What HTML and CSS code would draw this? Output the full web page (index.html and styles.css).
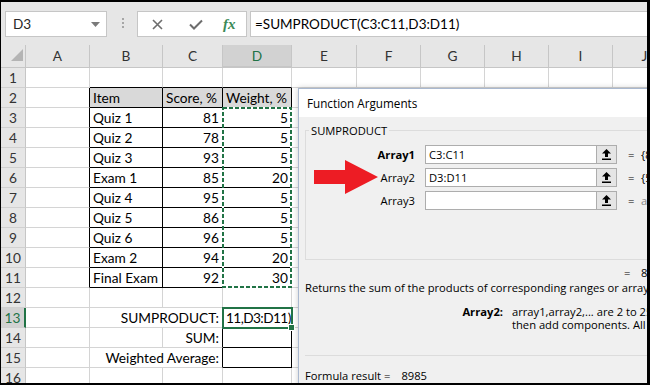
FILE: index.html
```html
<!DOCTYPE html>
<html lang="en">
<head>
    <meta charset="UTF-8">
    <meta name="viewport" content="width=device-width, initial-scale=1.0">
    <title>Function Arguments</title>
    <link rel="stylesheet" href="styles.css">
</head>
<body>
    <div class="app">
        <div class="toolbar">
            <div class="name-box">
                <span>D3</span>
                <svg width="9" height="5" viewBox="0 0 9 5"><path d="M0 0h9L4.5 5z" fill="#7a7a7a"/></svg>
            </div>
            <div class="grip"><i></i><i></i><i></i></div>
            <div class="fx-box">
                <svg class="fx-cancel" width="11" height="11" viewBox="0 0 11 11"><path d="M1 1l9 9M10 1l-9 9" stroke="#6d6d6d" stroke-width="1.6"/></svg>
                <svg class="fx-enter" width="14" height="11" viewBox="0 0 14 11"><path d="M1 5.5l4 4L13 1.5" fill="none" stroke="#6d6d6d" stroke-width="2"/></svg>
                <span class="fx">fx</span>
            </div>
            <div class="formula">=SUMPRODUCT(C3:C11,D3:D11)</div>
        </div>

        <div class="sheet">
            <table class="grid">
                <colgroup>
                    <col class="w-head">
                    <col class="w-a">
                    <col class="w-b">
                    <col class="w-c">
                    <col class="w-d">
                    <col class="w-e">
                    <col class="w-std">
                    <col class="w-std">
                    <col class="w-std">
                    <col class="w-std">
                    <col class="w-std">
                </colgroup>
                <tr class="col-heads">
                    <th class="corner"><svg width="12" height="12" viewBox="0 0 12 12"><path d="M12 0v12H0z" fill="#b4b4b4"/></svg></th>
                    <th>A</th><th>B</th><th>C</th><th class="sel">D</th><th>E</th><th>F</th><th>G</th><th>H</th><th>I</th><th>J</th>
                </tr>
                <tr><th>1</th><td></td><td class="bt"></td><td class="bt"></td><td class="bt"></td><td></td><td></td><td></td><td></td><td></td><td></td></tr>
                <tr><th>2</th><td class="br"></td><td class="t hd">Item</td><td class="t hd">Score, %</td><td class="t hd">Weight, %</td><td></td><td></td><td></td><td></td><td></td><td></td></tr>
                <tr><th>3</th><td class="br"></td><td class="t">Quiz 1</td><td class="t n">81</td><td class="t n">5</td><td></td><td></td><td></td><td></td><td></td><td></td></tr>
                <tr><th>4</th><td class="br"></td><td class="t">Quiz 2</td><td class="t n">78</td><td class="t n">5</td><td></td><td></td><td></td><td></td><td></td><td></td></tr>
                <tr><th>5</th><td class="br"></td><td class="t">Quiz 3</td><td class="t n">93</td><td class="t n">5</td><td></td><td></td><td></td><td></td><td></td><td></td></tr>
                <tr><th>6</th><td class="br"></td><td class="t">Exam 1</td><td class="t n">85</td><td class="t n">20</td><td></td><td></td><td></td><td></td><td></td><td></td></tr>
                <tr><th>7</th><td class="br"></td><td class="t">Quiz 4</td><td class="t n">95</td><td class="t n">5</td><td></td><td></td><td></td><td></td><td></td><td></td></tr>
                <tr><th>8</th><td class="br"></td><td class="t">Quiz 5</td><td class="t n">86</td><td class="t n">5</td><td></td><td></td><td></td><td></td><td></td><td></td></tr>
                <tr><th>9</th><td class="br"></td><td class="t">Quiz 6</td><td class="t n">96</td><td class="t n">5</td><td></td><td></td><td></td><td></td><td></td><td></td></tr>
                <tr><th>10</th><td class="br"></td><td class="t">Exam 2</td><td class="t n">94</td><td class="t n">20</td><td></td><td></td><td></td><td></td><td></td><td></td></tr>
                <tr><th>11</th><td class="br"></td><td class="t">Final Exam</td><td class="t n">92</td><td class="t n">30</td><td></td><td></td><td></td><td></td><td></td><td></td></tr>
                <tr><th>12</th><td></td><td></td><td></td><td></td><td></td><td></td><td></td><td></td><td></td><td></td></tr>
                <tr><th class="sel-row">13</th><td></td><td colspan="2" class="n">SUMPRODUCT:</td><td class="active">11,D3:D11)</td><td></td><td></td><td></td><td></td><td></td><td></td></tr>
                <tr><th>14</th><td></td><td></td><td class="n br">SUM:</td><td class="t"></td><td></td><td></td><td></td><td></td><td></td><td></td></tr>
                <tr><th>15</th><td></td><td colspan="2" class="n br">Weighted Average:</td><td class="t"></td><td></td><td></td><td></td><td></td><td></td><td></td></tr>
                <tr><th>16</th><td></td><td></td><td></td><td></td><td></td><td></td><td></td><td></td><td></td><td></td></tr>
            </table>
            <!-- copy marquee round D3:D11 -->
            <svg class="ants" width="70" height="181" viewBox="0 0 70 181">
                <rect x="1" y="1" width="68" height="179" fill="none" stroke="#fff" stroke-width="2"/>
                <rect x="1" y="1" width="68" height="179" fill="none" stroke="#217346" stroke-width="2" stroke-dasharray="4 2"/>
            </svg>
        </div>

        <div class="dialog">
            <div class="dialog-title">Function Arguments</div>
            <div class="dialog-body">
                <fieldset class="func">
                    <legend>SUMPRODUCT</legend>
                    <div class="arg">
                        <label class="arg-name req">Array1</label>
                        <div class="ref">
                            <span class="ref-input">C3:C11</span>
                            <span class="ref-btn"><svg width="9" height="11" viewBox="0 0 9 11"><path d="M4.5 0L9 4.5H6V8H3V4.5H0z" fill="#000"/><rect y="9.5" width="9" height="1.5" fill="#000"/></svg></span>
                        </div>
                        <span class="arg-eq">=</span>
                        <span class="arg-val">{81;78;93;85;95;86;96;94;92}</span>
                    </div>
                    <div class="arg">
                        <label class="arg-name">Array2</label>
                        <div class="ref">
                            <span class="ref-input">D3:D11</span>
                            <span class="ref-btn"><svg width="9" height="11" viewBox="0 0 9 11"><path d="M4.5 0L9 4.5H6V8H3V4.5H0z" fill="#000"/><rect y="9.5" width="9" height="1.5" fill="#000"/></svg></span>
                        </div>
                        <span class="arg-eq">=</span>
                        <span class="arg-val">{5;5;5;20;5;5;5;20;30}</span>
                    </div>
                    <div class="arg">
                        <label class="arg-name">Array3</label>
                        <div class="ref">
                            <span class="ref-input"></span>
                            <span class="ref-btn"><svg width="9" height="11" viewBox="0 0 9 11"><path d="M4.5 0L9 4.5H6V8H3V4.5H0z" fill="#000"/><rect y="9.5" width="9" height="1.5" fill="#000"/></svg></span>
                        </div>
                        <span class="arg-eq">=</span>
                        <span class="arg-val empty">array</span>
                    </div>
                </fieldset>

                <div class="total"><span class="arg-eq">=</span><span class="total-val">8985</span></div>
                <p class="desc">Returns the sum of the products of corresponding ranges or arrays.</p>
                <div class="help">
                    <b>Array2:</b>
                    <p>array1,array2,... are 2 to 255 arrays for which you want to multiply and<br>then add components. All arrays must have the same dimensions.</p>
                </div>
                <div class="result"><span>Formula result =</span><span class="result-val">8985</span></div>
            </div>
        </div>

        <!-- red pointer added over the screenshot -->
        <svg class="pointer" width="66" height="34" viewBox="0 0 66 34">
            <path d="M1 10H32V0L65 17L32 34V24H1z" fill="#ed1c24"/>
        </svg>
    </div>
</body>
</html>
```

FILE: styles.css
```css
body {
    margin: 0;
    background-color: #000;
}

.app {
    position: relative;
    width: 646px;
    height: 381px;
    margin: 2px 0 0 1px;
    overflow: hidden;
    background-color: #fff;
    font-family: Lato, "Liberation Sans", sans-serif;
    color: #000;
}

/* formula bar */

.toolbar {
    display: flex;
    align-items: flex-start;
    height: 43px;
    padding: 9px 0 0 4px;
    box-sizing: border-box;
    background-color: #e6e6e6;
}

.name-box {
    display: flex;
    align-items: center;
    justify-content: space-between;
    width: 102px;
    height: 26px;
    padding: 0 6px 0 7px;
    box-sizing: border-box;
    background-color: #fff;
    border: 1px solid #c6c6c6;
    font-size: 13.6px;
    color: #262626;
}

.grip {
    display: flex;
    flex-direction: column;
    gap: 2px;
    margin: 7px 0 0 15px;
}

.grip i {
    width: 2px;
    height: 2px;
    background-color: #a6a6a6;
}

.fx-box {
    display: flex;
    align-items: center;
    width: 110px;
    height: 26px;
    margin-left: 13px;
    padding-left: 14px;
    box-sizing: border-box;
    background-color: #fff;
    border: 1px solid #c6c6c6;
}

.fx-enter {
    margin-left: 26px;
}

.fx {
    margin-left: 20px;
    font-family: "Liberation Serif", serif;
    font-style: italic;
    font-weight: bold;
    font-size: 15px;
    color: #3b8a57;
}

.formula {
    flex: 1;
    height: 26px;
    margin-left: 3px;
    padding-left: 4px;
    box-sizing: border-box;
    background-color: #fff;
    border: 1px solid #c6c6c6;
    border-right: none;
    font-size: 13.5px;
    line-height: 24px;
    white-space: nowrap;
}

/* sheet */

.sheet {
    position: relative;
}

.grid {
    border-collapse: separate;
    border-spacing: 0;
    table-layout: fixed;
    width: 676px;
}

.w-head { width: 25px; }
.w-a { width: 64px; }
.w-b { width: 73px; }
.w-c { width: 60px; }
.w-d { width: 69px; }
.w-e { width: 65px; }
.w-std { width: 64px; }

.grid td,
.grid th {
    height: 20px;
    padding: 0 3px;
    box-sizing: border-box;
    border-right: 1px solid #d4d4d4;
    border-bottom: 1px solid #d4d4d4;
    font-size: 13.7px;
    line-height: 18px;
    vertical-align: bottom;
    white-space: nowrap;
    overflow: hidden;
}

.grid th {
    padding: 0;
    font-weight: normal;
    background-color: #e6e6e6;
    color: #333;
    border-right-color: #c6c6c6;
    border-bottom-color: #d0d0d0;
    text-align: center;
}

.grid .col-heads th {
    height: 23px;
    border-bottom-color: #c6c6c6;
    vertical-align: middle;
}

.grid .corner {
    text-align: right;
    vertical-align: bottom;
}

.corner svg {
    display: block;
    margin: 0 2px 3px auto;
}

.grid .sel {
    background-color: #d2d2d2;
    color: #217346;
    border-bottom: 2px solid #217346;
}

.grid .sel-row {
    background-color: #d2d2d2;
    color: #217346;
    border-right: 2px solid #217346;
}

.grid .t {
    border-right-color: #000;
    border-bottom-color: #000;
}

.grid .br {
    border-right-color: #000;
}

.grid .bt {
    border-bottom-color: #000;
}

.grid .hd {
    background-color: #d9d9d9;
}

.grid .n {
    text-align: right;
}

.grid .active {
    position: relative;
    overflow: visible;
    letter-spacing: -0.6px;
    outline: 2px solid #217346;
    outline-offset: -1px;
}

.grid .active::after {
    content: "";
    position: absolute;
    right: -4px;
    bottom: -4px;
    width: 5px;
    height: 5px;
    background-color: #217346;
    border: 1px solid #fff;
}

.ants {
    position: absolute;
    left: 221px;
    top: 62px;
}

/* dialog */

.dialog {
    position: absolute;
    left: 297px;
    top: 86px;
    width: 380px;
    height: 320px;
    border: 1px solid #a9b8cf;
    background-color: #f0f0f0;
    box-shadow: 0 0 6px rgba(0, 0, 0, 0.2);
    font-family: "Open Sans", "Noto Sans", sans-serif;
    font-size: 11.2px;
    line-height: 15px;
}

.dialog-title {
    height: 28px;
    padding-left: 8px;
    background-color: #fff;
    font-size: 11.7px;
    line-height: 28px;
}

.dialog-body {
    padding: 6px 0 0 6px;
}

.func {
    margin: 0;
    padding: 0 0 49px 3px;
    border: 1px solid #dcdcdc;
}

.func legend {
    padding: 0 2px;
}

.arg {
    display: flex;
    align-items: center;
    height: 19px;
    margin-top: 4px;
    white-space: nowrap;
}

.arg:first-of-type {
    margin-top: 7px;
}

.arg-name {
    width: 116px;
    padding-right: 10px;
    box-sizing: border-box;
    text-align: right;
}

.arg-name.req {
    font-weight: bold;
}

.ref {
    display: flex;
    width: 192px;
    height: 19px;
    box-sizing: border-box;
    background-color: #fff;
    border: 1px solid #adadad;
}

.ref-input {
    flex: 1;
    padding-left: 3px;
    line-height: 17px;
}

.ref-btn {
    display: flex;
    align-items: center;
    justify-content: center;
    width: 19px;
    background-color: #e5e5e5;
    border-left: 1px solid #adadad;
}

.arg-eq {
    flex: none;
    width: 12px;
    margin-left: 11px;
}

.arg-val {
    margin-left: 1px;
}

.arg-val.empty {
    color: #8a8a8a;
}

.total {
    display: flex;
    margin: 5px 0 0 308px;
    white-space: nowrap;
}

.total-val {
    margin-left: 5px;
}

.desc {
    margin: 0;
    white-space: nowrap;
}

.help {
    display: flex;
    margin-top: 10px;
    padding-bottom: 24px;
    border-bottom: 1px solid #dcdcdc;
    line-height: 13px;
    white-space: nowrap;
}

.help b {
    flex: none;
    width: 198px;
    text-align: right;
}

.help p {
    margin: 0 0 0 9px;
}

.result {
    margin-top: 12px;
    white-space: nowrap;
}

.result-val {
    margin-left: 11px;
}

.pointer {
    position: absolute;
    left: 312px;
    top: 158px;
}
```
